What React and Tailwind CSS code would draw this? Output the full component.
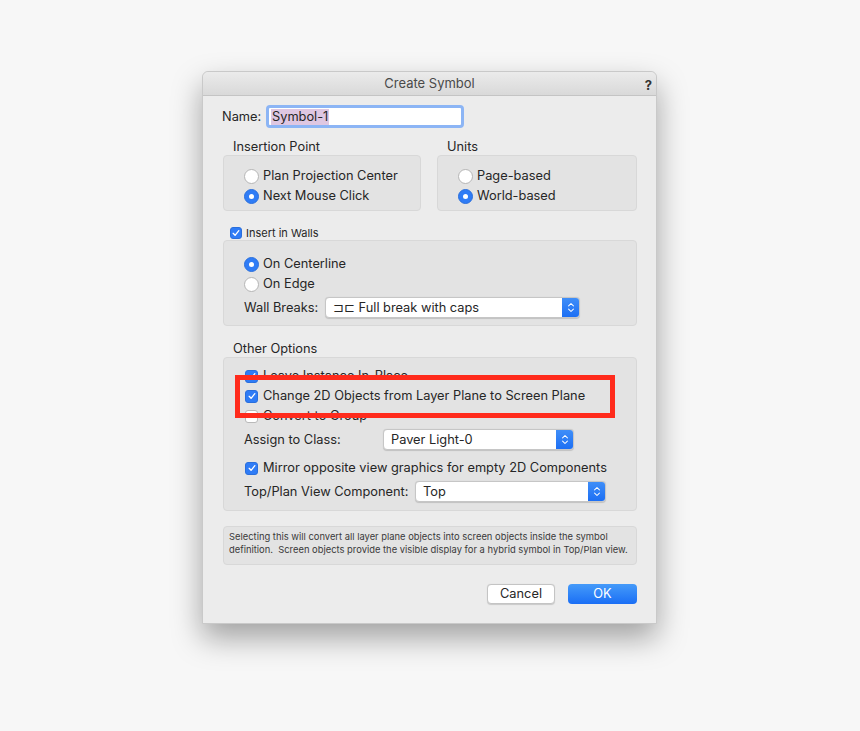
import React from 'react';

const font = { fontFamily: 'Inter, "Liberation Sans", sans-serif' };

const Radio = ({ on }) => (
    <span
        className={`w-[15px] h-[15px] rounded-full flex items-center justify-center shrink-0 ${
            on ? 'bg-[#2f7cf6] border border-[#2a6fdc]' : 'bg-white border border-[#b5b5b5]'
        }`}
    >
        {on && <span className="w-[5px] h-[5px] rounded-full bg-white" />}
    </span>
);

const Check = ({ on, small }) => (
    <span
        className={`${small ? 'w-[12px] h-[12px]' : 'w-[13px] h-[13px]'} rounded-[3px] flex items-center justify-center shrink-0 ${
            on ? 'bg-[#2f7cf6] border border-[#2a6fdc]' : 'bg-white border border-[#b9b9b9]'
        }`}
    >
        {on && (
            <svg viewBox="0 0 12 12" className="w-[10px] h-[10px]">
                <path d="M2.6 6.4 L4.9 8.8 L9.4 3.2" fill="none" stroke="white" strokeWidth="1.6" strokeLinecap="round" strokeLinejoin="round" />
            </svg>
        )}
    </span>
);

const Select = ({ value, width }) => (
    <div
        className="h-[21px] flex items-stretch bg-white border border-[#c6c6c6] rounded-[4px] shadow-[0_0.5px_1px_rgba(0,0,0,0.15)] overflow-hidden"
        style={{ width }}
    >
        <span className="flex-1 pl-[7px] text-[12.8px] leading-[19px] text-[#262626]">{value}</span>
        <span className="w-[17px] bg-gradient-to-b from-[#3f8ef8] to-[#1c6ff4] flex items-center justify-center">
            <svg viewBox="0 0 10 16" className="w-[8px] h-[13px]">
                <path d="M2 6 L5 3 L8 6 M2 10 L5 13 L8 10" fill="none" stroke="white" strokeWidth="1.3" strokeLinecap="round" strokeLinejoin="round" />
            </svg>
        </span>
    </div>
);

const RadioRow = ({ on, label }) => (
    <div className="h-[20px] flex items-center gap-[4px]">
        <Radio on={on} />
        <span className="text-[12.8px]">{label}</span>
    </div>
);

const CheckRow = ({ on, label }) => (
    <div className="h-[20px] flex items-center gap-[5px]">
        <Check on={on} />
        <span className="text-[12.8px]">{label}</span>
    </div>
);

const Box = ({ className, children }) => (
    <div className={`bg-[#e3e3e3] border border-[#d8d8d8] rounded-[4px] ${className}`}>{children}</div>
);

export default function App() {
    return (
        <div className="min-h-[731px] w-full bg-[#f7f7f7] flex pl-[202px] pt-[71px]" style={font}>
            <div className="w-[455px] h-[553px] bg-[#ececec] border border-[#c9c9c9] rounded-t-[6px] shadow-[0_14px_30px_rgba(0,0,0,0.35)] flex flex-col text-[#262626]">
                {/* Title bar */}
                <div className="h-[24px] relative flex items-center justify-center rounded-t-[6px] bg-gradient-to-b from-[#ebebeb] to-[#d9d9d9] border-b border-[#c4c4c4]">
                    <span className="text-[13px] text-[#4a4a4a] mt-[1px]">Create Symbol</span>
                    <span className="absolute right-[4px] top-[4px] text-[13px] font-bold text-[#333]">?</span>
                </div>

                <div className="flex flex-col pl-[20px] pr-[19px]">
                    {/* Name */}
                    <div className="mt-[9px] flex items-center">
                        <span className="text-[12.8px] ml-[-1px] w-[44px]">Name:</span>
                        <div className="w-[198px] h-[23px] rounded-[4px] border-[3px] border-[#8cb5f5] bg-white flex items-center pl-[2px]">
                            <span className="text-[12.8px] bg-[#dec7e2] px-[1px] leading-[16px]">Symbol-1</span>
                        </div>
                    </div>

                    {/* Insertion Point / Units */}
                    <div className="mt-[11px] flex gap-[16px]">
                        <div className="w-[198px] flex flex-col">
                            <span className="text-[12.8px] leading-[16px] pl-[10px]">Insertion Point</span>
                            <Box className="h-[56px] pt-[10px] pl-[20px]">
                                <RadioRow label="Plan Projection Center" />
                                <RadioRow on label="Next Mouse Click" />
                            </Box>
                        </div>
                        <div className="w-[200px] flex flex-col">
                            <span className="text-[12.8px] leading-[16px] pl-[10px]">Units</span>
                            <Box className="h-[56px] pt-[10px] pl-[20px]">
                                <RadioRow label="Page-based" />
                                <RadioRow on label="World-based" />
                            </Box>
                        </div>
                    </div>

                    {/* Insert in Walls */}
                    <div className="mt-[15px] h-[14px] flex items-center gap-[4px] pl-[7px]">
                        <Check on small />
                        <span className="text-[11px]">Insert in Walls</span>
                    </div>
                    <Box className="h-[86px] pt-[13px] pl-[20px]">
                        <RadioRow on label="On Centerline" />
                        <RadioRow label="On Edge" />
                        <div className="mt-[3px] flex items-center">
                            <span className="text-[12.8px] w-[81px]">Wall Breaks:</span>
                            <Select value="⊐⊏ Full break with caps" width={255} />
                        </div>
                    </Box>

                    {/* Other Options */}
                    <span className="mt-[15px] text-[12.8px] leading-[16px] pl-[10px]">Other Options</span>
                    <Box className="relative h-[154px] pt-[8px] pl-[21px]">
                        <CheckRow on label="Leave Instance In-Place" />
                        <CheckRow on label="Change 2D Objects from Layer Plane to Screen Plane" />
                        <CheckRow label="Convert to Group" />
                        <div className="mt-[3px] flex items-center">
                            <span className="text-[12.8px] w-[139px] ml-[-1px]">Assign to Class:</span>
                            <Select value="Paver Light-0" width={191} />
                        </div>
                        <div className="mt-[8px]">
                            <CheckRow on label="Mirror opposite view graphics for empty 2D Components" />
                        </div>
                        <div className="mt-[3px] flex items-center">
                            <span className="text-[12.8px] w-[171px] ml-[-1px]">Top/Plan View Component:</span>
                            <Select value="Top" width={191} />
                        </div>
                        {/* highlight annotation */}
                        <div className="absolute left-[11px] top-[17px] w-[380px] h-[43px] border-[5px] border-[#ff2b1c]" />
                    </Box>

                    {/* Info */}
                    <Box className="mt-[15px] h-[39px] px-[5px] pt-[3px]">
                        <p className="text-[9.4px] leading-[13px] text-[#3a3a3a] whitespace-pre">
                            {'Selecting this will convert all layer plane objects into screen objects inside the symbol\ndefinition.  Screen objects provide the visible display for a hybrid symbol in Top/Plan view.'}
                        </p>
                    </Box>

                    {/* Buttons */}
                    <div className="mt-[19px] flex justify-end gap-[13px]">
                        <button className="w-[68px] h-[20px] bg-white border border-[#c4c4c4] rounded-[4px] text-[12.8px] leading-[18px] shadow-[0_0.5px_1px_rgba(0,0,0,0.15)]">
                            Cancel
                        </button>
                        <button className="w-[69px] h-[20px] rounded-[4px] text-[12.8px] leading-[20px] text-white bg-gradient-to-b from-[#459af9] to-[#1a6ef5]">
                            OK
                        </button>
                    </div>
                </div>
            </div>
        </div>
    );
}
